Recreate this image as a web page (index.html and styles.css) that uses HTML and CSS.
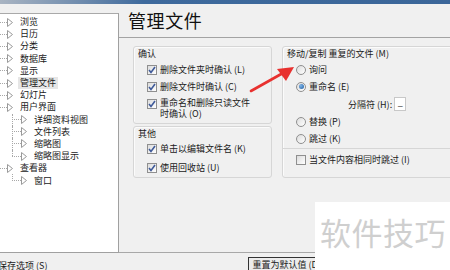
FILE: index.html
```html
<!DOCTYPE html>
<html lang="zh-CN">
<head>
    <meta charset="UTF-8">
    <title>管理文件</title>
    <link rel="stylesheet" href="styles.css">
</head>
<body>
<div class="window">
    <div class="title-strip"></div>

    <div class="main">
        <!-- 左侧选项树 -->
        <div class="tree">
            <div class="tree-item"><span class="branch"></span><svg class="toggle" width="6" height="9" viewBox="0 0 6 9"><path d="M0.5 0.5 L5.5 4.5 L0.5 8.5 Z" fill="#fff" stroke="#9a9a9a"/></svg><span class="tree-text">浏览</span></div>
            <div class="tree-item"><span class="branch"></span><svg class="toggle" width="6" height="9" viewBox="0 0 6 9"><path d="M0.5 0.5 L5.5 4.5 L0.5 8.5 Z" fill="#fff" stroke="#9a9a9a"/></svg><span class="tree-text">日历</span></div>
            <div class="tree-item"><span class="branch"></span><svg class="toggle" width="6" height="9" viewBox="0 0 6 9"><path d="M0.5 0.5 L5.5 4.5 L0.5 8.5 Z" fill="#fff" stroke="#9a9a9a"/></svg><span class="tree-text">分类</span></div>
            <div class="tree-item"><span class="branch"></span><svg class="toggle" width="6" height="9" viewBox="0 0 6 9"><path d="M0.5 0.5 L5.5 4.5 L0.5 8.5 Z" fill="#fff" stroke="#9a9a9a"/></svg><span class="tree-text">数据库</span></div>
            <div class="tree-item"><span class="branch"></span><svg class="toggle" width="6" height="9" viewBox="0 0 6 9"><path d="M0.5 0.5 L5.5 4.5 L0.5 8.5 Z" fill="#fff" stroke="#9a9a9a"/></svg><span class="tree-text">显示</span></div>
            <div class="tree-item"><span class="branch"></span><svg class="toggle" width="6" height="9" viewBox="0 0 6 9"><path d="M0.5 0.5 L5.5 4.5 L0.5 8.5 Z" fill="#fff" stroke="#9a9a9a"/></svg><span class="tree-text selected">管理文件</span></div>
            <div class="tree-item"><span class="branch"></span><svg class="toggle" width="6" height="9" viewBox="0 0 6 9"><path d="M0.5 0.5 L5.5 4.5 L0.5 8.5 Z" fill="#fff" stroke="#9a9a9a"/></svg><span class="tree-text">幻灯片</span></div>
            <div class="tree-item"><span class="branch"></span><svg class="toggle" width="6" height="9" viewBox="0 0 6 9"><path d="M0.5 0.5 L5.5 4.5 L0.5 8.5 Z" fill="#fff" stroke="#9a9a9a"/></svg><span class="tree-text">用户界面</span></div>
            <div class="tree-children">
                <div class="tree-item"><span class="branch"></span><svg class="toggle" width="6" height="9" viewBox="0 0 6 9"><path d="M0.5 0.5 L5.5 4.5 L0.5 8.5 Z" fill="#fff" stroke="#9a9a9a"/></svg><span class="tree-text">详细资料视图</span></div>
                <div class="tree-item"><span class="branch"></span><svg class="toggle" width="6" height="9" viewBox="0 0 6 9"><path d="M0.5 0.5 L5.5 4.5 L0.5 8.5 Z" fill="#fff" stroke="#9a9a9a"/></svg><span class="tree-text">文件列表</span></div>
                <div class="tree-item"><span class="branch"></span><svg class="toggle" width="6" height="9" viewBox="0 0 6 9"><path d="M0.5 0.5 L5.5 4.5 L0.5 8.5 Z" fill="#fff" stroke="#9a9a9a"/></svg><span class="tree-text">缩略图</span></div>
                <div class="tree-item last"><span class="branch"></span><svg class="toggle" width="6" height="9" viewBox="0 0 6 9"><path d="M0.5 0.5 L5.5 4.5 L0.5 8.5 Z" fill="#fff" stroke="#9a9a9a"/></svg><span class="tree-text">缩略图显示</span></div>
            </div>
            <div class="tree-item"><span class="branch"></span><svg class="toggle" width="6" height="9" viewBox="0 0 6 9"><path d="M0.5 0.5 L5.5 4.5 L0.5 8.5 Z" fill="#fff" stroke="#9a9a9a"/></svg><span class="tree-text">查看器</span></div>
            <div class="tree-children">
                <div class="tree-item last"><span class="branch"></span><svg class="toggle" width="6" height="9" viewBox="0 0 6 9"><path d="M0.5 0.5 L5.5 4.5 L0.5 8.5 Z" fill="#fff" stroke="#9a9a9a"/></svg><span class="tree-text">窗口</span></div>
            </div>
        </div>

        <!-- 右侧设置页 -->
        <div class="content">
            <div class="page-head">
                <h1 class="page-title">管理文件</h1>
            </div>
            <div class="panes">
                <div class="pane-col">
                    <div class="group group-confirm">
                        <div class="group-label">确认</div>
                        <div class="opt-row"><span class="cb checked"><svg width="8" height="8" viewBox="0 0 8 8"><path d="M1 4 L3 6.5 L7 1" fill="none" stroke="#3f5a99" stroke-width="1.6"/></svg></span><span>删除文件夹时确认 (L)</span></div>
                        <div class="opt-row"><span class="cb checked"><svg width="8" height="8" viewBox="0 0 8 8"><path d="M1 4 L3 6.5 L7 1" fill="none" stroke="#3f5a99" stroke-width="1.6"/></svg></span><span>删除文件时确认 (C)</span></div>
                        <div class="opt-row"><span class="cb checked"><svg width="8" height="8" viewBox="0 0 8 8"><path d="M1 4 L3 6.5 L7 1" fill="none" stroke="#3f5a99" stroke-width="1.6"/></svg></span><span class="two-line">重命名和删除只读文件<br>时确认 (O)</span></div>
                    </div>
                    <div class="group group-other">
                        <div class="group-label">其他</div>
                        <div class="opt-row"><span class="cb checked"><svg width="8" height="8" viewBox="0 0 8 8"><path d="M1 4 L3 6.5 L7 1" fill="none" stroke="#3f5a99" stroke-width="1.6"/></svg></span><span>单击以编辑文件名 (K)</span></div>
                        <div class="opt-row"><span class="cb checked"><svg width="8" height="8" viewBox="0 0 8 8"><path d="M1 4 L3 6.5 L7 1" fill="none" stroke="#3f5a99" stroke-width="1.6"/></svg></span><span>使用回收站 (U)</span></div>
                    </div>
                </div>

                <div class="group group-dup">
                    <div class="group-label">移动/复制 重复的文件 (M)</div>
                    <div class="opt-row"><span class="rb"></span><span>询问</span></div>
                    <div class="opt-row"><span class="rb checked"></span><span>重命名 (E)</span></div>
                    <div class="sep-row"><span>分隔符 (H):</span><span class="sep-input">_</span></div>
                    <div class="opt-row"><span class="rb"></span><span>替换 (P)</span></div>
                    <div class="opt-row"><span class="rb"></span><span>跳过 (K)</span></div>
                    <div class="opt-row same-row"><span class="cb"></span><span>当文件内容相同时跳过 (I)</span></div>
                </div>
            </div>
        </div>
    </div>

    <div class="footer">
        <span class="save-opt">保存选项 (S)</span>
        <span class="reset-btn">重置为默认值 (D)</span>
    </div>

    <!-- 标注箭头 -->
    <svg class="annotation" width="450" height="270" viewBox="0 0 450 270">
        <path d="M251 91 L283 73" stroke="#e8312f" stroke-width="2.6" stroke-linecap="round"/>
        <path d="M294 67 L277 69 L286 81 Z" fill="#e8312f"/>
    </svg>

    <div class="watermark">软件技巧</div>
</div>
</body>
</html>
```

FILE: styles.css
```css
* {
    box-sizing: border-box;
}
body {
    margin: 0;
    font-family: "Noto Sans CJK SC", "Liberation Sans", sans-serif;
    font-size: 9px;
    color: #1a1a1a;
}
.window {
    position: relative;
    width: 450px;
    height: 270px;
    overflow: hidden;
    background-color: #f0f0f0;
    display: flex;
    flex-direction: column;
}
.title-strip {
    flex: none;
    height: 4px;
    background: linear-gradient(to right, #a9b4c2 0, #6f8cae 18%, #3e6a9d 32%, #3b6699 100%);
}
.main {
    flex: none;
    display: flex;
    height: 249px;
}

/* 左侧树 */
.tree {
    flex: none;
    width: 119px;
    margin-top: 9px;
    padding-top: 2px;
    background-color: #fff;
    border-top: 1px solid #a9a9a9;
    border-right: 1px solid #a0a0a0;
    border-bottom: 1px solid #a0a0a0;
}
.tree-item {
    position: relative;
    display: flex;
    align-items: center;
    height: 12.2px;
    line-height: 12px;
    white-space: nowrap;
}
.branch {
    width: 7px;
    border-top: 1px dotted #a8a8a8;
}
.toggle {
    flex: none;
    margin-right: 7px;
}
.tree-text.selected {
    background-color: #e6e6e6;
    margin-left: -2px;
    padding: 0 2px;
}
.tree-children {
    margin-left: 12px;
}
.tree-children .branch {
    width: 9px;
}
.tree-children .tree-item::before {
    content: '';
    position: absolute;
    left: 0;
    top: 0;
    height: 100%;
    border-left: 1px dotted #a8a8a8;
}
.tree-children .tree-item.last::before {
    height: 50%;
}

/* 右侧内容 */
.content {
    flex: 1;
    min-width: 0;
    overflow: hidden;
    border-bottom: 1px solid #a8a8a8;
}
.page-head {
    height: 34px;
    padding: 5px 0 0 9px;
    border-bottom: 1px solid #a3a3a3;
}
.page-title {
    margin: 0;
    font-size: 18px;
    font-weight: normal;
    letter-spacing: 0.6px;
    line-height: 22px;
    color: #111;
}
.panes {
    display: grid;
    grid-template-columns: 139px 190px;
    gap: 10px;
    padding: 8px 0 0 14px;
}
.pane-col {
    display: flex;
    flex-direction: column;
    gap: 2px;
}
.group {
    border: 1px solid #d6d6d6;
    border-radius: 3px;
    box-shadow: inset 1px 1px 0 #fbfbfb;
    padding: 2px 0 0 0;
}
.group-label {
    height: 10px;
    line-height: 10px;
    padding-left: 4px;
    margin-bottom: 2px;
}
.opt-row {
    display: flex;
    align-items: flex-start;
    gap: 3px;
    padding: 3px 0 3px 13px;
    line-height: 11px;
    white-space: nowrap;
}
.two-line {
    line-height: 10.5px;
}
.group-other .group-label {
    margin-bottom: 0;
}
.group-other .opt-row {
    padding-top: 4px;
    padding-bottom: 4px;
}
.group-confirm {
    height: 78px;
}
.group-other {
    height: 52px;
}
.group-dup {
    height: 132px;
}
.cb, .rb {
    flex: none;
    width: 10px;
    height: 10px;
    margin-top: 0.5px;
    border: 1px solid #8f8f8f;
    background: linear-gradient(135deg, #dcdcdc, #fff);
    display: flex;
    align-items: center;
    justify-content: center;
}
.rb {
    border-radius: 50%;
}
.rb.checked::after {
    content: '';
    width: 5px;
    height: 5px;
    border-radius: 50%;
    background: radial-gradient(circle at 35% 35%, #7fb4e8, #1f5d9f);
}
.sep-row {
    display: flex;
    align-items: center;
    gap: 2px;
    height: 18px;
    padding-left: 65px;
    white-space: nowrap;
}
.sep-input {
    width: 12px;
    height: 14px;
    background-color: #fff;
    border: 1px solid #c8c8c8;
    line-height: 10px;
    text-align: center;
}
.same-row {
    margin-top: 1px;
    padding-top: 5px;
    border-top: 1px solid #d6d6d6;
}

/* 底部 */
.footer {
    display: flex;
    align-items: flex-start;
    height: 17px;
}
.save-opt {
    padding-top: 8px;
    margin-left: -2px;
    line-height: 10px;
}
.reset-btn {
    margin-left: 201px;
    margin-top: 4px;
    height: 14px;
    padding: 1px 3px;
    border: 1px solid #333;
    background-color: #ececec;
    line-height: 11px;
    white-space: nowrap;
}

/* 覆盖物 */
.annotation {
    position: absolute;
    left: 0;
    top: 0;
    pointer-events: none;
}
.watermark {
    position: absolute;
    left: 315px;
    top: 202px;
    width: 135px;
    height: 68px;
    background-color: #fff;
    padding: 12px 0 0 5px;
    font-size: 31px;
    line-height: 36px;
    color: #cfcfcf;
    letter-spacing: 0.5px;
    white-space: nowrap;
}
```
